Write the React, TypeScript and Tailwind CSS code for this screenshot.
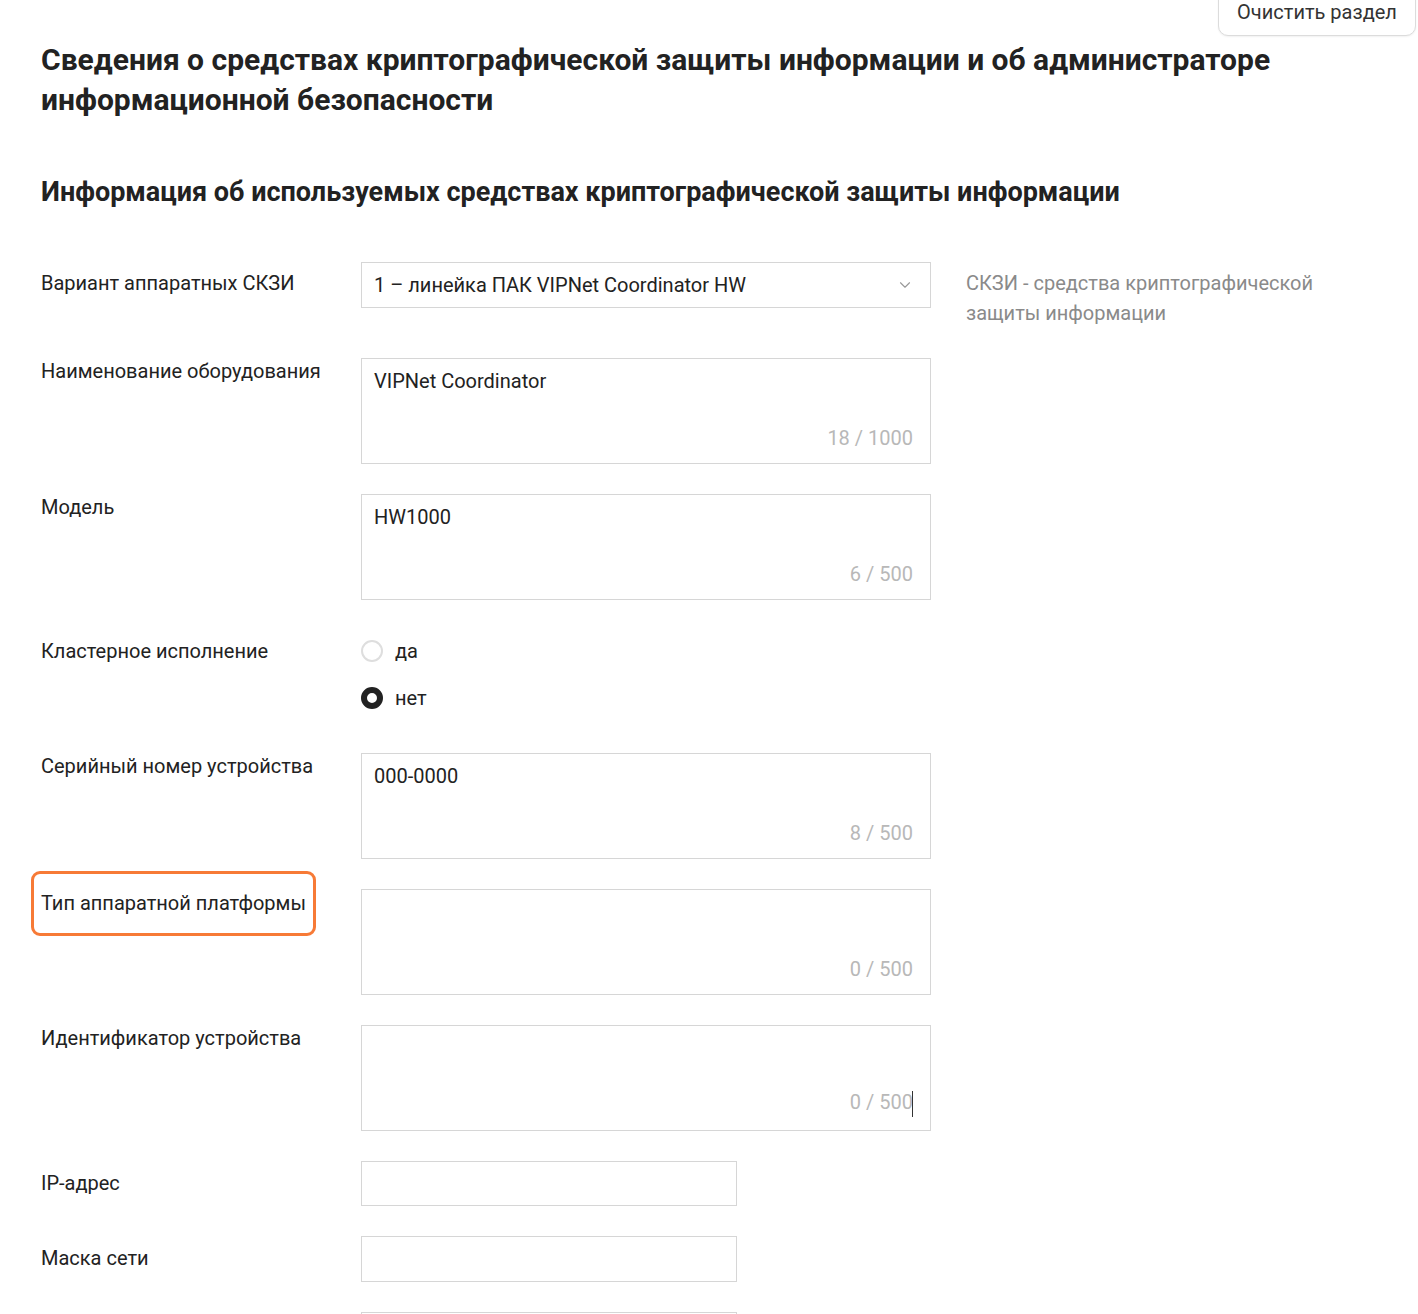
import { ChevronDown } from "lucide-react";

const font = { fontFamily: "Roboto, 'Noto Sans', Arial, sans-serif" };

function Label({ children, pt }: { children: React.ReactNode; pt: string }) {
    return <div className={`w-[320px] shrink-0 text-[20px] leading-6 text-[#222] ${pt}`}>{children}</div>;
}

function TextArea({ value, count, caret }: { value?: string; count: string; caret?: boolean }) {
    return (
        <div className="w-[570px] h-[106px] border border-[#d6d6d6] bg-white flex flex-col justify-between pl-3 pr-[17px] pt-[10px] pb-[13px]">
            <div className="text-[20px] leading-6 text-[#222]">{value ?? ""}</div>
            <div className="self-end text-[20px] leading-6 text-[#b8b8b8]">
                {count}
                {caret && <span className="inline-block w-px h-[26px] bg-[#333] align-middle -ml-px" />}
            </div>
        </div>
    );
}

export default function App() {
    return (
        <div className="min-h-screen w-[1418px] bg-white relative overflow-hidden" style={font}>
            <button className="absolute top-[-12px] left-[1218px] w-[198px] h-[48px] rounded-[10px] border border-[#dcdcdc] bg-white text-[20px] text-[#333] flex items-center justify-center shadow-[0_1px_2px_rgba(0,0,0,0.06)]">
                Очистить раздел
            </button>

            <div className="pl-[41px] pt-[40px]">
                <h1 className="text-[30px] leading-[40px] font-bold text-[#222] max-w-[1260px]">
                    Сведения о средствах криптографической защиты информации и об администраторе информационной безопасности
                </h1>

                <h2 className="mt-[56px] text-[27px] leading-8 font-bold text-[#222]">
                    Информация об используемых средствах криптографической защиты информации
                </h2>

                <div className="mt-[54px] flex flex-col gap-[30px]">
                    {/* Вариант */}
                    <div className="flex h-[66px]">
                        <Label pt="pt-[9px]">Вариант аппаратных СКЗИ</Label>
                        <div className="w-[570px] h-[46px] border border-[#d6d6d6] bg-white flex items-center justify-between pl-3 pr-4">
                            <span className="text-[20px] text-[#222]">1 – линейка ПАК VIPNet Coordinator HW</span>
                            <ChevronDown className="w-[18px] h-[18px] text-[#999]" strokeWidth={1.5} />
                        </div>
                        <div className="ml-[35px] pt-[6px] w-[380px] text-[20px] leading-[30px] text-[#8a8a8a]">
                            СКЗИ - средства криптографической защиты информации
                        </div>
                    </div>

                    <div className="flex">
                        <Label pt="pt-px">Наименование оборудования</Label>
                        <TextArea value="VIPNet Coordinator" count="18 / 1000" />
                    </div>

                    <div className="flex">
                        <Label pt="pt-px">Модель</Label>
                        <TextArea value="HW1000" count="6 / 500" />
                    </div>

                    {/* Кластерное исполнение */}
                    <div className="flex pb-[14px]">
                        <Label pt="pt-[9px]">Кластерное исполнение</Label>
                        <div className="flex flex-col gap-[25px] pt-[10px]">
                            <label className="flex items-center gap-[12px] h-[22px]">
                                <span className="w-[22px] h-[22px] rounded-full border-2 border-[#dedede] bg-white" />
                                <span className="text-[20px] text-[#222]">да</span>
                            </label>
                            <label className="flex items-center gap-[12px] h-[22px]">
                                <span className="w-[22px] h-[22px] rounded-full border-[6px] border-[#222] bg-white" />
                                <span className="text-[20px] text-[#222]">нет</span>
                            </label>
                        </div>
                    </div>

                    <div className="flex">
                        <Label pt="pt-px">Серийный номер устройства</Label>
                        <TextArea value="000-0000" count="8 / 500" />
                    </div>

                    <div className="flex">
                        <div className="w-[320px] shrink-0 relative">
                            <div className="text-[20px] leading-6 text-[#222] pt-[2px]">Тип аппаратной платформы</div>
                            <div className="absolute left-[-10px] top-[-18px] w-[285px] h-[65px] border-[3px] border-[#f77a36] rounded-[9px]" />
                        </div>
                        <TextArea count="0 / 500" />
                    </div>

                    <div className="flex">
                        <Label pt="pt-px">Идентификатор устройства</Label>
                        <TextArea count="0 / 500" caret />
                    </div>

                    <div className="flex">
                        <Label pt="pt-[10px]">IP-адрес</Label>
                        <div className="w-[376px] h-[45px] border border-[#d6d6d6] bg-white" />
                    </div>

                    <div className="flex">
                        <Label pt="pt-[10px]">Маска сети</Label>
                        <div className="w-[376px] h-[46px] border border-[#d6d6d6] bg-white" />
                    </div>

                    <div className="flex">
                        <div className="w-[320px] shrink-0" />
                        <div className="w-[376px] h-[46px] border border-[#d6d6d6] bg-white" />
                    </div>
                </div>
            </div>
        </div>
    );
}
